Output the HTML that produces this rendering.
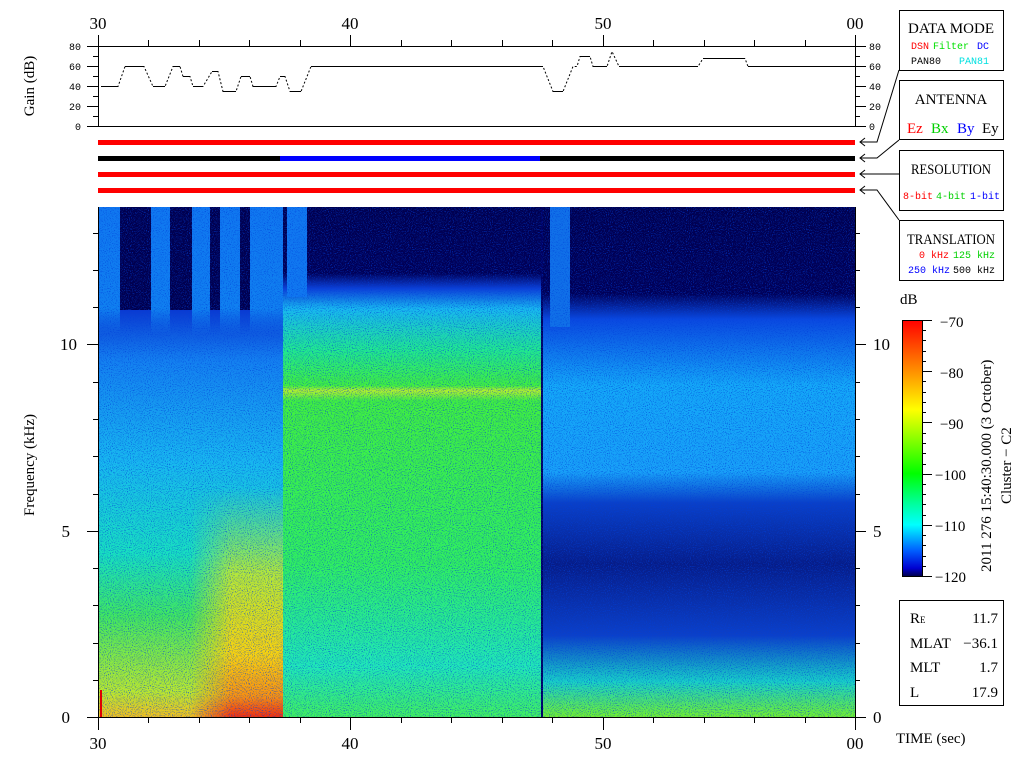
<!DOCTYPE html>
<html><head><meta charset="utf-8"><style>
html,body{margin:0;padding:0;background:#fff;width:1024px;height:768px;overflow:hidden}
svg{display:block}
.m{font-family:"Liberation Mono",monospace;font-size:10px}
.s{font-family:"Liberation Serif",serif;font-size:15px}
</style></head><body>
<svg width="1024" height="768" viewBox="0 0 1024 768" xmlns="http://www.w3.org/2000/svg">
<defs>
<linearGradient id="gL" x1="0" y1="207" x2="0" y2="717" gradientUnits="userSpaceOnUse">
<stop offset="0" stop-color="#0830c8"/><stop offset="0.2" stop-color="#0a38d0"/>
<stop offset="0.3" stop-color="#1480f0"/><stop offset="0.5" stop-color="#18b8f0"/>
<stop offset="0.68" stop-color="#18e0c0"/><stop offset="0.8" stop-color="#40e860"/>
<stop offset="0.95" stop-color="#b8e830"/><stop offset="1" stop-color="#f0c020"/></linearGradient>
<linearGradient id="gH" x1="0" y1="207" x2="0" y2="717" gradientUnits="userSpaceOnUse">
<stop offset="0" stop-color="#e0d020" stop-opacity="0"/><stop offset="0.55" stop-color="#a0e040" stop-opacity="0"/>
<stop offset="0.72" stop-color="#d8e820" stop-opacity="0.8"/><stop offset="0.88" stop-color="#f8d010"/>
<stop offset="0.96" stop-color="#f89010"/><stop offset="1" stop-color="#f03010"/></linearGradient>
<linearGradient id="gM" x1="0" y1="207" x2="0" y2="717" gradientUnits="userSpaceOnUse">
<stop offset="0" stop-color="#000050"/><stop offset="0.13" stop-color="#000058"/>
<stop offset="0.16" stop-color="#0c40d8"/><stop offset="0.2" stop-color="#18b8f0"/>
<stop offset="0.28" stop-color="#20e890"/><stop offset="0.35" stop-color="#40f040"/>
<stop offset="0.36" stop-color="#b0f030"/><stop offset="0.38" stop-color="#40f040"/>
<stop offset="0.7" stop-color="#30f060"/><stop offset="0.9" stop-color="#20e8b8"/>
<stop offset="1" stop-color="#40f060"/></linearGradient>
<linearGradient id="gR" x1="0" y1="207" x2="0" y2="717" gradientUnits="userSpaceOnUse">
<stop offset="0" stop-color="#000050"/><stop offset="0.17" stop-color="#000058"/>
<stop offset="0.22" stop-color="#0a48e0"/><stop offset="0.35" stop-color="#14a8f8"/>
<stop offset="0.52" stop-color="#18a0f8"/><stop offset="0.58" stop-color="#0a40c8"/>
<stop offset="0.7" stop-color="#061c88"/><stop offset="0.84" stop-color="#0c40c8"/>
<stop offset="0.93" stop-color="#18d0c8"/><stop offset="1" stop-color="#70f030"/></linearGradient>
<linearGradient id="gS" x1="0" y1="207" x2="0" y2="717" gradientUnits="userSpaceOnUse">
<stop offset="0" stop-color="#1078f0"/><stop offset="0.2" stop-color="#1080f0"/><stop offset="0.25" stop-color="#1080f0" stop-opacity="0"/></linearGradient>
<linearGradient id="hx" x1="0" y1="0" x2="1" y2="0">
<stop offset="0" stop-color="#fff" stop-opacity="0"/><stop offset="0.45" stop-color="#fff" stop-opacity="1"/><stop offset="1" stop-color="#fff"/></linearGradient>
<mask id="mk"><rect x="190" y="207" width="93" height="510" fill="url(#hx)"/></mask>
<linearGradient id="cb" x1="0" y1="0" x2="0" y2="1">
<stop offset="0" stop-color="#ff0000"/><stop offset="0.2" stop-color="#ff9000"/>
<stop offset="0.35" stop-color="#ffff00"/><stop offset="0.6" stop-color="#00ff00"/>
<stop offset="0.72" stop-color="#00ffa0"/><stop offset="0.8" stop-color="#00ffff"/>
<stop offset="0.9" stop-color="#0060ff"/><stop offset="0.97" stop-color="#0000d0"/><stop offset="1" stop-color="#000050"/></linearGradient>
<filter id="nz" x="0" y="0" width="100%" height="100%">
<feTurbulence type="fractalNoise" baseFrequency="0.95" numOctaves="1" seed="3"/>
<feColorMatrix values="0 0 0 0 0  0 0 0 0 0.05  0 0 0 0 0.7  0 0 0 -3 1.45"/>
</filter>
</defs>

<rect x="98" y="207" width="185" height="510" fill="url(#gL)"/>
<rect x="98" y="207" width="185" height="103" fill="#000050"/>
<g fill="url(#gS)">
<rect x="99" y="207" width="21" height="510"/><rect x="151" y="207" width="19" height="510"/>
<rect x="192" y="207" width="18" height="510"/><rect x="220" y="207" width="20" height="510"/>
<rect x="250" y="207" width="33" height="510"/></g>
<rect x="190" y="207" width="93" height="510" fill="url(#gH)" mask="url(#mk)"/>
<rect x="283" y="207" width="260" height="510" fill="url(#gM)"/>
<rect x="287" y="207" width="20" height="90" fill="#1078f0"/>
<rect x="543" y="207" width="312" height="510" fill="url(#gR)"/>
<rect x="550" y="207" width="20" height="120" fill="#1070e8"/>
<rect x="541" y="207" width="2" height="510" fill="#000060"/>
<rect x="98" y="207" width="757" height="510" filter="url(#nz)"/>
<rect x="100" y="690" width="2" height="27" fill="#e00000"/>

<g stroke="#000" stroke-width="1" fill="none">
<path d="M98.5 207V730M855.5 207V730M87 717.5H866"/>
<path d="M87 531.5H98M87 344.5H98M855 531.5H866M855 344.5H866"/>
<path d="M93 680.5h5M93 643.5h5M93 605.5h5M93 568.5h5M93 494.5h5M93 456.5h5M93 419.5h5M93 382.5h5M93 307.5h5M93 270.5h5M93 233.5h5"/>
<path d="M855 680.5h5M855 643.5h5M855 605.5h5M855 568.5h5M855 494.5h5M855 456.5h5M855 419.5h5M855 382.5h5M855 307.5h5M855 270.5h5M855 233.5h5"/>
<path d="M350.5 717V730M603.5 717V730M148.5 717v6M199.5 717v6M249.5 717v6M300.5 717v6M401.5 717v6M451.5 717v6M502.5 717v6M552.5 717v6M653.5 717v6M704.5 717v6M754.5 717v6M805.5 717v6"/>
</g>
<g class="s" text-anchor="middle" fill="#000">
<text x="98" y="749" font-size="17">30</text><text x="350" y="749" font-size="17">40</text>
<text x="603" y="749" font-size="17">50</text><text x="855" y="749" font-size="17">00</text>
<text x="98" y="29" font-size="17">30</text><text x="350" y="29" font-size="17">40</text>
<text x="603" y="29" font-size="17">50</text><text x="855" y="29" font-size="17">00</text>
</g>
<g class="s" fill="#000" font-size="17">
<text x="70" y="723" text-anchor="end" font-size="17">0</text>
<text x="70" y="537" text-anchor="end" font-size="17">5</text>
<text x="77" y="350" text-anchor="end" font-size="17">10</text>
<text x="873" y="723" font-size="17">0</text>
<text x="873" y="537" font-size="17">5</text>
<text x="873" y="350" font-size="17">10</text>
</g>
<text class="s" transform="translate(34 465) rotate(-90)" text-anchor="middle" font-size="16">Frequency (kHz)</text>

<g stroke="#000" fill="none" stroke-width="1">
<path d="M98.5 35V126M87 46.5H866M87 126.5H866M855.5 35V126"/>
<path d="M148.5 40v6M199.5 40v6M249.5 40v6M300.5 40v6M401.5 40v6M451.5 40v6M502.5 40v6M552.5 40v6M653.5 40v6M704.5 40v6M754.5 40v6M805.5 40v6M350.5 35v11M603.5 35v11"/>
<path d="M87 66.5h11M87 86.5h11M87 106.5h11M93 56.5h5M93 76.5h5M93 96.5h5M93 116.5h5"/>
<path d="M855 66.5h11M855 86.5h11M855 106.5h11M855 56.5h5M855 76.5h5M855 96.5h5M855 116.5h5"/>
<path stroke-dasharray="2 2" d="M101 86.5H118L125 66.5H144L153 86.5H165L173 66.5H180L183 76.5H190L193 86.5H203L212 71.5H218L223 91.5H236L241 76.5H250L253 86.5H276L280 76.5H285L290 91.5H301L311 66.5H543L553 91.5H563L573 66.5H577L580 56.5H590L593 66.5H607L612 51.5L619 66.5H698L703 58.5H745L748 66.5H855"/>
<path d="M101 86.5H118M125 66.5H144M153 86.5H165M173 66.5H180M183 76.5H190M193 86.5H203M212 71.5H218M223 91.5H236M241 76.5H250M253 86.5H276M280 76.5H285M290 91.5H301M311 66.5H543M553 91.5H563M580 56.5H590M593 66.5H607M619 66.5H698M703 58.5H745M748 66.5H855"/>
</g>
<g class="m" fill="#000" font-size="10">
<text x="81" y="50" text-anchor="end">80</text><text x="81" y="70" text-anchor="end">60</text>
<text x="81" y="90" text-anchor="end">40</text><text x="81" y="110" text-anchor="end">20</text>
<text x="81" y="130" text-anchor="end">0</text>
<text x="869" y="50">80</text><text x="869" y="70">60</text><text x="869" y="90">40</text>
<text x="869" y="110">20</text><text x="869" y="130">0</text>
</g>
<text class="s" transform="translate(34 86) rotate(-90)" text-anchor="middle" font-size="16">Gain (dB)</text>

<rect x="98" y="140" width="757" height="5" fill="#ff0000"/>
<rect x="98" y="156" width="182" height="5" fill="#000"/>
<rect x="280" y="156" width="260" height="5" fill="#0000ff"/>
<rect x="540" y="156" width="315" height="5" fill="#000"/>
<rect x="98" y="172" width="757" height="5" fill="#ff0000"/>
<rect x="98" y="188" width="757" height="5" fill="#ff0000"/>
<g stroke="#000" fill="none">
<path d="M899 70L877 142H860M865 138L860 142L865 146"/>
<path d="M899 140L877 158H860M865 154L860 158L865 162"/>
<path d="M899 174H860M865 170L860 174L865 178"/>
<path d="M899 220L877 190H860M865 186L860 190L865 194"/>
</g>

<g fill="#fff" stroke="#000">
<rect x="899.5" y="10.5" width="104" height="60"/><rect x="899.5" y="80.5" width="104" height="59"/>
<rect x="899.5" y="150.5" width="104" height="60"/><rect x="899.5" y="220.5" width="104" height="60"/>
<rect x="899.5" y="600.5" width="104" height="105"/>
</g>
<g class="s" text-anchor="middle" font-size="15">
<text x="951" y="33" textLength="86" lengthAdjust="spacingAndGlyphs">DATA MODE</text><text x="951" y="104">ANTENNA</text>
<text x="951" y="174" textLength="80" lengthAdjust="spacingAndGlyphs">RESOLUTION</text><text x="951" y="244" textLength="88" lengthAdjust="spacingAndGlyphs">TRANSLATION</text>
</g>
<g class="m" font-size="9.5">
<text x="911" y="49" fill="#ff0000">DSN</text><text x="933" y="49" fill="#00e000">Filter</text><text x="977" y="49" fill="#0000ff">DC</text>
<text x="911" y="64" fill="#000">PAN80</text><text x="959" y="64" fill="#00e0e0">PAN81</text>
<text x="903" y="199" fill="#ff0000">8-bit</text><text x="936" y="199" fill="#00d000">4-bit</text><text x="970" y="199" fill="#0000ff">1-bit</text>
<text x="919" y="258" fill="#ff0000">0 kHz</text><text x="953" y="258" fill="#00d000">125 kHz</text>
<text x="908" y="273" fill="#0000ff">250 kHz</text><text x="953" y="273" fill="#000">500 kHz</text>
</g>
<g class="s" font-size="16">
<text x="907" y="133" fill="#ff0000">Ez</text><text x="931" y="133" fill="#00d000">Bx</text>
<text x="957" y="133" fill="#0000ff">By</text><text x="982" y="133" fill="#000">Ey</text>
</g>

<rect x="902" y="320" width="20" height="256" fill="url(#cb)"/>
<rect x="902.5" y="320.5" width="20" height="256" fill="none" stroke="#000"/>
<g stroke="#000"><path d="M922 320.5h10M922 371.5h10M922 422.5h10M922 474.5h10M922 525.5h10M922 576.5h10M922 330.5h4M922 340.5h4M922 351.5h4M922 361.5h4M922 381.5h4M922 392.5h4M922 402.5h4M922 412.5h4M922 433.5h4M922 443.5h4M922 453.5h4M922 464.5h4M922 484.5h4M922 494.5h4M922 504.5h4M922 515.5h4M922 535.5h4M922 545.5h4M922 556.5h4M922 566.5h4"/></g>
<g class="s" font-size="16">
<text x="900" y="304">dB</text>
<text x="940" y="327">−70</text><text x="940" y="378">−80</text><text x="940" y="429">−90</text>
<text x="935" y="480">−100</text><text x="935" y="531">−110</text><text x="935" y="582">−120</text>
<text transform="translate(991 572) rotate(-90)">2011 276 15:40:30.000 (3 October)</text>
<text transform="translate(1011 504) rotate(-90)">Cluster − C2</text>
<text x="910" y="623">R<tspan font-size="9">E</tspan></text><text x="998" y="623" text-anchor="end">11.7</text>
<text x="910" y="648">MLAT</text><text x="998" y="648" text-anchor="end">−36.1</text>
<text x="910" y="672">MLT</text><text x="998" y="672" text-anchor="end">1.7</text>
<text x="910" y="697">L</text><text x="998" y="697" text-anchor="end">17.9</text>
<text x="896" y="743">TIME (sec)</text>
</g>
</svg>
</body></html>
